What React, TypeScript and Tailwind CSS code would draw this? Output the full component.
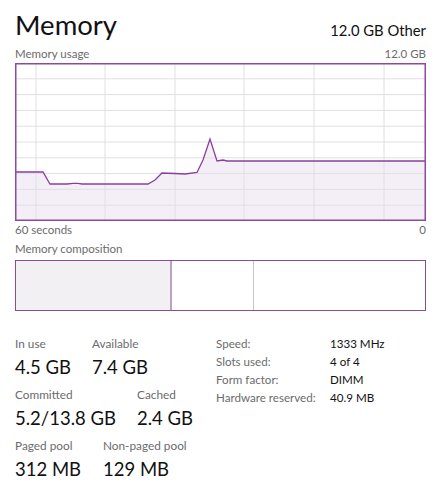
import React from "react";

const F = { fontFamily: 'Lato, "Noto Sans", Arial, sans-serif' };

function UsageChart() {
  const hLines = [15.8, 31.6, 47.4, 63.2, 79, 94.8, 110.6, 126.4, 142.2];
  const vLines = [21, 90, 160, 229, 299, 369];
  const pts: [number, number][] = [
    [0, 109], [28, 109], [35, 121], [52, 121], [58, 120.3], [63, 120.3], [67, 121],
    [133, 121], [140, 117], [147, 110], [160, 110.5], [170, 111], [182, 109.5],
    [188, 97], [195, 76], [202, 98], [208, 97], [212, 98], [411, 98],
  ];
  const line = pts.map((p) => p.join(",")).join(" ");
  const area = `0,158 ${line} 411,158`;
  return (
    <svg width="411" height="158" viewBox="0 0 411 158" className="block">
      <rect x="0" y="0" width="411" height="158" fill="#ffffff" />
      <polygon points={area} fill="#f4eff6" />
      {hLines.map((y) => (
        <line key={y} x1="0" x2="411" y1={y} y2={y} stroke="#e2dee4" strokeWidth="1" />
      ))}
      {vLines.map((x) => (
        <line key={x} x1={x} x2={x} y1="0" y2="158" stroke="#e2dee4" strokeWidth="1" />
      ))}
      <polyline points={line} fill="none" stroke="#8a3fa0" strokeWidth="1.3" />
      <rect x="0.75" y="0.75" width="409.5" height="156.5" fill="none" stroke="#8a4a9d" strokeWidth="1.5" />
    </svg>
  );
}

function Stat({ label, value, className = "" }: { label: string; value: string; className?: string }) {
  return (
    <div className={`flex flex-col ${className}`}>
      <div className="h-[16px] text-[11.8px] leading-[16px] text-[#6b6b6b]">{label}</div>
      <div className="h-[32px] text-[18.5px] leading-[30px] text-[#111]">{value}</div>
    </div>
  );
}

export default function App() {
  return (
    <div className="w-[446px] h-[487px] bg-white overflow-hidden pl-[15px] pr-[20px] pt-[6px]" style={F}>
      <div className="flex items-end justify-between h-[38px]">
        <div className="text-[27.5px] leading-[38px] text-[#111]">Memory</div>
        <div className="text-[14.8px] leading-[20px] pb-[4px] text-[#111]">12.0 GB Other</div>
      </div>
      <div className="flex justify-between h-[19px] text-[11.5px] leading-[19px] text-[#6b6b6b]">
        <span>Memory usage</span>
        <span>12.0 GB</span>
      </div>
      <UsageChart />
      <div className="flex justify-between h-[18px] text-[11.5px] leading-[18px] text-[#6b6b6b]">
        <span>60 seconds</span>
        <span>0</span>
      </div>
      <div className="h-[21px] text-[11.5px] leading-[20px] text-[#6b6b6b]">Memory composition</div>
      <div className="flex w-[411px] h-[51px] border-[1.5px] border-[#8a4a9d]">
        <div className="w-[156px] bg-[#f3f0f4] border-r-2 border-[#b9a3c0]" />
        <div className="w-[82px] border-r border-[#c4c4c4]" />
        <div className="flex-1" />
      </div>
      <div className="flex mt-[25px]">
        <div className="w-[201px] flex flex-col gap-[3px]">
          <div className="flex">
            <Stat label="In use" value="4.5 GB" className="w-[77px]" />
            <Stat label="Available" value="7.4 GB" />
          </div>
          <div className="flex">
            <Stat label="Committed" value="5.2/13.8 GB" className="w-[122px]" />
            <Stat label="Cached" value="2.4 GB" />
          </div>
          <div className="flex">
            <Stat label="Paged pool" value="312 MB" className="w-[88px]" />
            <Stat label="Non-paged pool" value="129 MB" />
          </div>
        </div>
        <div className="grid grid-cols-[114px_auto] auto-rows-[18px] text-[11.6px] leading-[18px] -mt-[1px]">
          <span className="text-[#6b6b6b]">Speed:</span>
          <span className="text-[#111]">1333 MHz</span>
          <span className="text-[#6b6b6b]">Slots used:</span>
          <span className="text-[#111]">4 of 4</span>
          <span className="text-[#6b6b6b]">Form factor:</span>
          <span className="text-[#111]">DIMM</span>
          <span className="text-[#6b6b6b]">Hardware reserved:</span>
          <span className="text-[#111]">40.9 MB</span>
        </div>
      </div>
    </div>
  );
}
